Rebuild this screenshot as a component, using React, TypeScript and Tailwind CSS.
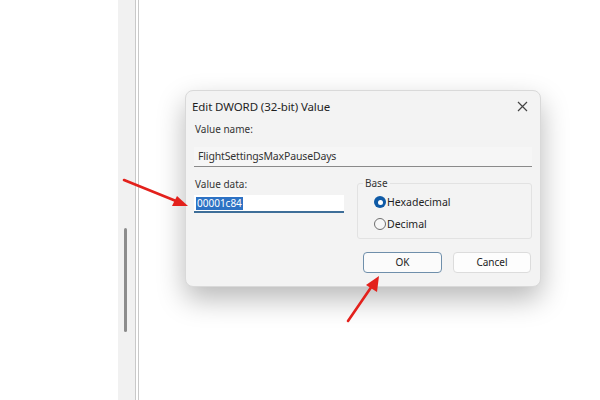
export default function App() {
  return (
    <div className="relative w-[600px] h-[400px] overflow-hidden bg-white flex font-['Noto_Sans','Liberation_Sans',sans-serif] text-[#1f1f1f]">
      {/* left pane */}
      <div className="w-[118px] bg-white" />
      <div className="w-[17px] bg-[#f1f1f1] pl-[6px] pt-[228px]">
        <div className="w-[3px] h-[104px] rounded-full bg-[#8c8c8c]" />
      </div>
      <div className="w-[4px] border-l border-r border-[#c9c9c9] bg-white" />

      {/* main */}
      <div className="flex-1 pl-[46px] pt-[90px]">
        <div className="w-[356px] h-[197px] rounded-[8px] border border-[#d9d9d9] bg-[#f3f3f3] shadow-[0_12px_28px_rgba(0,0,0,0.28)] flex flex-col">
          {/* title */}
          <div className="h-[30px] flex items-center justify-between pl-[6px] pr-[12px] pt-[1px]">
            <span className="text-[11.5px] tracking-[-0.1px]">Edit DWORD (32-bit) Value</span>
            <svg width="11" height="11" viewBox="0 0 11 11" className="text-[#444]">
              <path d="M1 1 L10 10 M10 1 L1 10" stroke="currentColor" strokeWidth="1.2" />
            </svg>
          </div>

          <div className="px-[8px] flex flex-col">
            <div className="text-[10px] text-[#333] pl-[1px] mt-[1px] leading-[14px]">Value name:</div>
            <div className="mt-[11px] h-[20px] border-b border-[#8a8a8a] bg-[#f6f6f6] text-[10.5px] leading-[19px] pl-[4px] text-[#333] tracking-[-0.15px]">
              FlightSettingsMaxPauseDays
            </div>

            <div className="mt-[5px] flex justify-between">
              <div className="flex flex-col w-[150px]">
                <div className="text-[10px] text-[#333] pl-[1px] leading-[14px] mt-[5px]">Value data:</div>
                <div className="mt-[4px] h-[18px] bg-white border-b-2 border-[#3e6e98] pl-[2px] flex items-center">
                  <span className="bg-[#2d72c4] text-white text-[10px] leading-[13px] px-[1px]">00001c84</span>
                </div>
              </div>

              <div className="relative w-[175px] h-[56px] mt-[11px] rounded-[3px] border border-[#e2e2e2] flex flex-col pl-[16px] pt-[11px] gap-[8px]">
                <span className="absolute -top-[8px] left-[5px] bg-[#f3f3f3] px-[2px] text-[10px] text-[#333] leading-[14px]">Base</span>
                <label className="flex items-center gap-[1px] text-[10.5px] leading-[14px]">
                  <span className="w-[12px] h-[12px] rounded-full bg-[#0f5aa6] flex items-center justify-center">
                    <span className="w-[5px] h-[5px] rounded-full bg-white" />
                  </span>
                  Hexadecimal
                </label>
                <label className="flex items-center gap-[1px] text-[10.5px] leading-[14px]">
                  <span className="w-[12px] h-[12px] rounded-full border border-[#6e6e6e] bg-[#f7f7f7]" />
                  Decimal
                </label>
              </div>
            </div>

            <div className="mt-[13px] flex justify-end gap-[11px] pr-[1px]">
              <button className="w-[79px] h-[21px] rounded-[4px] border border-[#6f8fab] bg-[#fbfbfb] text-[10px] text-[#222]">OK</button>
              <button className="w-[78px] h-[21px] rounded-[4px] border border-[#dcdcdc] bg-[#fdfdfd] text-[10px] text-[#222]">Cancel</button>
            </div>
          </div>
        </div>
      </div>

      {/* annotation arrows */}
      <svg className="absolute inset-0 pointer-events-none" width="600" height="400" viewBox="0 0 600 400">
        <line x1="124" y1="180" x2="176" y2="201" stroke="#e3211c" strokeWidth="2.6" strokeLinecap="round" />
        <polygon points="188,206 172,206 177,196" fill="#e3211c" />
        <line x1="348" y1="321" x2="372" y2="286" stroke="#e3211c" strokeWidth="2.6" strokeLinecap="round" />
        <polygon points="379,276 377,292 366,285" fill="#e3211c" />
      </svg>
    </div>
  );
}
